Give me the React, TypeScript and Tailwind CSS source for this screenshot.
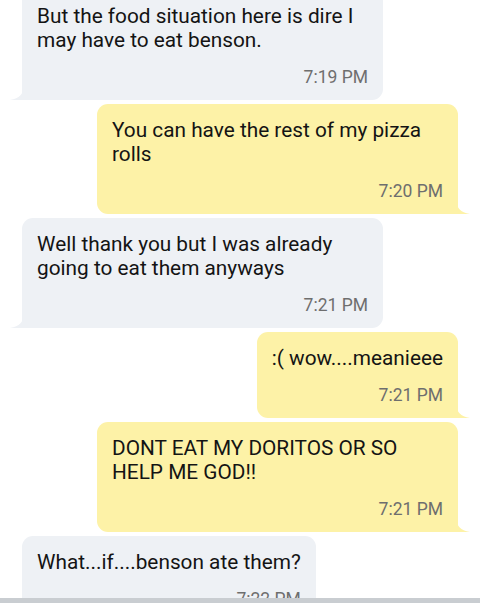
import React from 'react';

type Msg = { text: string; time: string; mine: boolean };

const messages: Msg[] = [
  { text: 'But the food situation here is dire I may have to eat benson.', time: '7:19 PM', mine: false },
  { text: 'You can have the rest of my pizza rolls', time: '7:20 PM', mine: true },
  { text: 'Well thank you but I was already going to eat them anyways', time: '7:21 PM', mine: false },
  { text: ':( wow....meanieee', time: '7:21 PM', mine: true },
  { text: 'DONT EAT MY DORITOS OR SO HELP ME GOD!!', time: '7:21 PM', mine: true },
  { text: 'What...if....benson ate them?', time: '7:22 PM', mine: false },
];

const Tail: React.FC<{ mine: boolean }> = ({ mine }) =>
  mine ? (
    <svg className="absolute bottom-0 -right-[12px]" width="13" height="12" viewBox="0 0 13 12">
      <path d="M0 0 C0 6 3 10 13 12 L0 12 Z" fill="#fdf2a7" />
    </svg>
  ) : (
    <svg className="absolute bottom-0 -left-[12px]" width="13" height="12" viewBox="0 0 13 12">
      <path d="M13 0 C13 6 10 10 0 12 L13 12 Z" fill="#eef1f5" />
    </svg>
  );

const Bubble: React.FC<{ msg: Msg }> = ({ msg }) => (
  <div className={`flex ${msg.mine ? 'justify-end pr-[22px]' : 'justify-start pl-[22px]'}`}>
    <div
      className={`relative max-w-[361px] px-[15px] pt-[14px] pb-[13px] ${
        msg.mine ? 'bg-[#fdf2a7] rounded-[11px] rounded-br-none' : 'bg-[#eef1f5] rounded-[11px] rounded-bl-none'
      }`}
    >
      <div className="text-[20.8px] leading-[24px] text-[#141414]">{msg.text}</div>
      <div className="mt-[15px] text-right text-[17.5px] leading-[20px] text-[#6e6e6e]">{msg.time}</div>
      <Tail mine={msg.mine} />
    </div>
  </div>
);

const App: React.FC = () => {
  return (
    <div className="flex h-[603px] w-[480px] flex-col overflow-hidden bg-white" style={{ fontFamily: 'Roboto, "Noto Sans", sans-serif' }}>
      <div className="flex-1 overflow-hidden">
        <div className="-mt-[10px] flex flex-col gap-1">
          {messages.map((m, i) => (
            <Bubble key={i} msg={m} />
          ))}
        </div>
      </div>
      <div className="h-[5px] bg-[#c9cdd1]" />
    </div>
  );
};

export default App;
